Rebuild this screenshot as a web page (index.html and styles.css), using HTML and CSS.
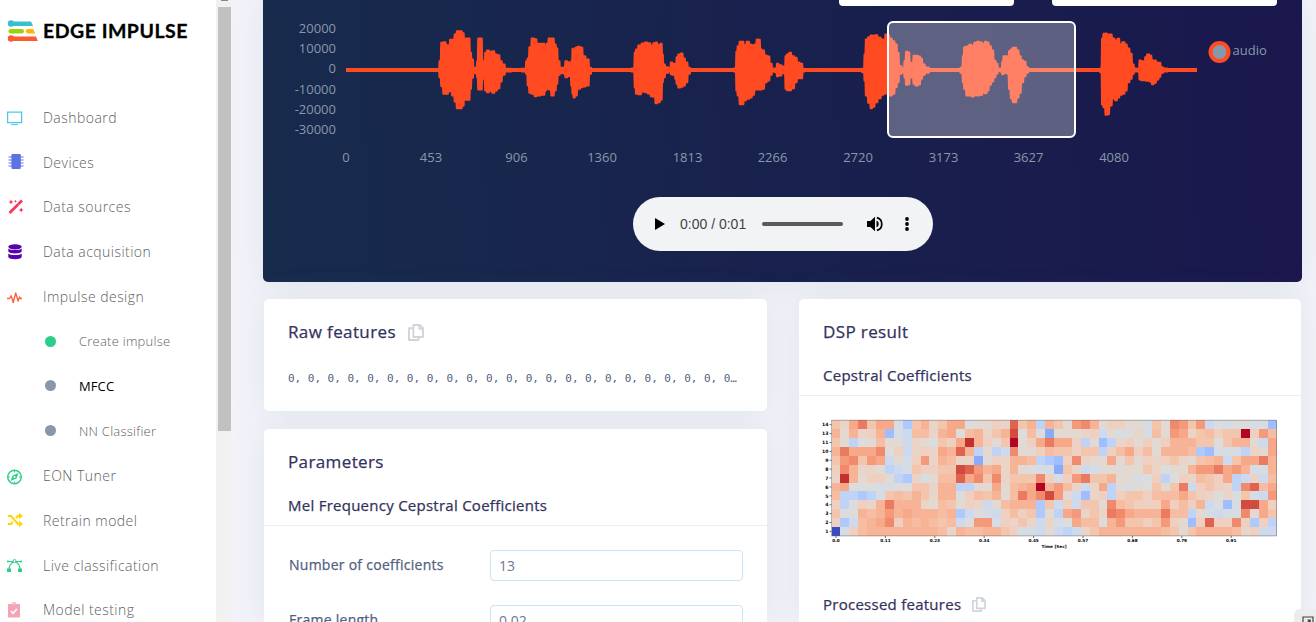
FILE: index.html
```html
<!DOCTYPE html>
<html lang="en">
<head>
<meta charset="utf-8">
<title>MFCC - Edge Impulse</title>
<link rel="stylesheet" href="styles.css">
</head>
<body>
<svg class="defs" width="0" height="0">
  <symbol id="copy" viewBox="0 0 16 17"><path d="M5.400 1h6.400L15 4.200V13H5.400zM11.300 1v3.700H15M5 4.200H1V16h9.500v-2.500" fill="none" stroke="currentColor" stroke-width="1.900" stroke-linejoin="round"/></symbol>
</svg>
<div class="app">
  <aside class="sidebar">
    <div class="logo">
      <svg width="32" height="24" viewBox="0 0 32 24">
        <path d="M3 2.500h21l2 4.500H3z" fill="#3bbfcf"/><circle cx="4" cy="4.500" r="3.200" fill="#3bbfcf"/>
        <rect x="1.500" y="10" width="15.500" height="4.400" rx="2.200" fill="#a0cf10"/>
        <path d="M21 10h5l2.300 4.400H21a2.200 2.200 0 0 1 0-4.400z" fill="#ffb500"/>
        <path d="M3 17.500h26l1.800 4.500H3z" fill="#fc5a2f"/><circle cx="4" cy="19.500" r="3.200" fill="#fc5a2f"/>
      </svg>
      <span class="wordmark">EDGE IMPULSE</span>
    </div>
    <nav class="menu">
      <a class="item"><svg viewBox="0 0 16 16" class="ico sky"><path d="M.6 3.100h14v10.500H.6z" fill="none" stroke="currentColor" stroke-width="1.300"/><path d="M4 15.600h7" stroke="currentColor" stroke-width="1"/></svg>Dashboard</a>
      <a class="item"><svg viewBox="0 0 16 16" class="ico indigo"><rect x="4.400" y="0" width="9.400" height="15" rx="1.200" fill="currentColor"/><path d="M1.500 3h15M1.500 6h15M1.500 9h15M1.500 12h15" stroke="currentColor" stroke-width="1.200"/></svg>Devices</a>
      <a class="item"><svg viewBox="0 0 16 16" class="ico red"><path d="M2.500 14 15 1.500" stroke="currentColor" stroke-width="2.600"/><path d="M10.500 4.300l1.600 1.600" stroke="#fff" stroke-width=".5"/><path d="M4 .5l.8 1.700 1.700.8-1.700.8L4 5.500l-.8-1.700L1.500 3l1.700-.8zM8.500.8l.5 1 1 .5-1 .5-.5 1-.5-1-1-.5 1-.5zM14.200 8.500l.8 1.700 1.500.8-1.500.8-.8 1.700-.8-1.700-1.700-.8 1.700-.8z" fill="currentColor"/></svg>Data sources</a>
      <a class="item"><svg viewBox="0 0 16 16" class="ico purple"><ellipse cx="8" cy="2.800" rx="6.700" ry="2.600" fill="currentColor"/><path d="M1.300 4.600c2 2 11.400 2 13.400 0v3c-1 2.600-12.400 2.600-13.400 0zM1.300 9.600c2 2 11.400 2 13.400 0V13c-1 3-12.400 3-13.400 0z" fill="currentColor"/></svg>Data acquisition</a>
      <a class="item"><svg viewBox="0 0 16 16" class="ico orange"><path d="M0 10.500h2.500L4.200 7.800l2 6.700L8.700 5l2.400 8 1.500-4 .9 1.500H15" fill="none" stroke="currentColor" stroke-width="1.400" stroke-linejoin="round"/></svg>Impulse design</a>
      <a class="item sub"><i class="dot on"></i>Create impulse</a>
      <a class="item sub active"><i class="dot"></i>MFCC</a>
      <a class="item sub"><i class="dot"></i>NN Classifier</a>
      <a class="item"><svg viewBox="0 0 16 16" class="ico green"><circle cx="7.500" cy="9" r="6.800" fill="none" stroke="currentColor" stroke-width="1.400"/><path d="M11.500 5 9.500 10.500l-6 2.500L5.600 7.500z" fill="currentColor"/><circle cx="7.500" cy="9" r="1" fill="#fff"/><path d="M7.500 2.500v2M7.500 13.500v2M1 9h2M12 9h2" stroke="currentColor"/></svg>EON Tuner</a>
      <a class="item"><svg viewBox="0 0 16 16" class="ico yellow"><path d="M1 4h3l7 8h2M1 12h3l1.800-2M8.800 6 11 4h2" fill="none" stroke="currentColor" stroke-width="2"/><path d="M12 .8 16 4l-4 3.200zM12 8.800l4 3.200-4 3.200z" fill="currentColor"/></svg>Retrain model</a>
      <a class="item"><svg viewBox="0 0 16 16" class="ico green"><path d="M1 4.500h13M2 12.500C2 9 3.500 6 7.500 4.500 11.500 6 13 9 13 12.500" fill="none" stroke="currentColor" stroke-width="1.200"/><path d="M0 11.500h4v3.500H0zM11 11.500h4v3.500h-4z" fill="currentColor"/><circle cx="7.500" cy="4" r="1.500" fill="#fff" stroke="currentColor"/><circle cx="1" cy="4.500" r="1.100" fill="currentColor"/><circle cx="14" cy="4.500" r="1.100" fill="currentColor"/></svg>Live classification</a>
      <a class="item"><svg viewBox="0 0 16 16" class="ico pink"><path d="M2 2h3a2 2 0 0 1 4 0h3a1 1 0 0 1 1 1v11.500a1 1 0 0 1-1 1H2a1 1 0 0 1-1-1V3a1 1 0 0 1 1-1z" fill="currentColor"/><path d="M4 9l2 2.300 4-4.300" fill="none" stroke="#fff" stroke-width="1.500"/><circle cx="7" cy="2" r=".7" fill="#fff"/></svg>Model testing</a>
    </nav>
  </aside>
  <div class="scrollbar"><div class="cap"></div><div class="thumb"></div></div>
  <main class="content">
    <section class="panel">
      <div class="selects"><div class="select sm"></div><div class="select lg"></div></div>
      <svg class="chart" id="chart" width="1039" height="175" viewBox="263 5 1039 175">
        <path d="M336 70.500h10" stroke="#222b35"/>
        <g id="wave" fill="#ff4a22" stroke="#ff4a22" stroke-linejoin="round"><path d="M346 70h851" stroke-width="4"/></g>
        <rect x="888" y="22" width="187" height="115" rx="5" fill="#fff" fill-opacity=".3" stroke="#fff" stroke-width="2"/>
        <g class="axis end">
          <text x="336" y="33">20000</text><text x="336" y="53">10000</text><text x="336" y="73">0</text><text x="336" y="94">-10000</text><text x="336" y="114">-20000</text><text x="336" y="134">-30000</text>
        </g>
        <g class="axis mid">
          <text x="346" y="162">0</text><text x="431" y="162">453</text><text x="516.500" y="162">906</text><text x="602" y="162">1360</text><text x="687.500" y="162">1813</text><text x="772.500" y="162">2266</text><text x="858" y="162">2720</text><text x="943.500" y="162">3173</text><text x="1028.500" y="162">3627</text><text x="1114" y="162">4080</text>
        </g>
        <circle cx="1219.500" cy="52" r="9" fill="#8898aa" stroke="#ff4a22" stroke-width="4"/>
        <text class="axis" x="1232.500" y="55">audio</text>
      </svg>
      <div class="player">
        <svg class="play" width="10" height="12" viewBox="0 0 10 12"><path d="M0 0l10 6-10 6z"/></svg>
        <span class="time">0:00 / 0:01</span>
        <div class="track"></div>
        <svg class="vol" width="16" height="16" viewBox="0 0 16 16"><path d="M0 5h3.500L8 .8v14.400L3.500 11H0z"/><path d="M9.500 4.500a3.800 3.800 0 0 1 0 7z"/><path d="M9.800 1.600a6.600 6.600 0 0 1 0 12.800" fill="none" stroke="#000" stroke-width="1.700"/></svg>
        <svg class="dots" width="4" height="14" viewBox="0 0 4 14"><circle cx="2" cy="2" r="1.900"/><circle cx="2" cy="7" r="1.900"/><circle cx="2" cy="12" r="1.900"/></svg>
      </div>
    </section>
    <div class="columns">
      <div class="col">
        <section class="card raw">
          <h3 class="title">Raw features <svg class="copy" width="16" height="17"><use href="#copy"/></svg></h3>
          <div class="values">0, 0, 0, 0, 0, 0, 0, 0, 0, 0, 0, 0, 0, 0, 0, 0, 0, 0, 0, 0, 0, 0, 0…</div>
        </section>
        <section class="card params">
          <h3 class="title">Parameters</h3>
          <h4 class="subtitle">Mel Frequency Cepstral Coefficients</h4>
          <div class="form">
            <label class="label">Number of coefficients</label><div class="field">13</div>
            <label class="label">Frame length</label><div class="field">0.02</div>
          </div>
        </section>
      </div>
      <section class="card dsp">
        <h3 class="title">DSP result</h3>
        <h4 class="subtitle">Cepstral Coefficients</h4>
        <svg class="heat" id="heat" width="460" height="140" viewBox="819 415 460 140"></svg>
        <h4 class="subtitle processed">Processed features <svg class="copy" width="14" height="15"><use href="#copy"/></svg></h4>
      </section>
    </div>
  </main>
  <div class="corner"><svg width="12" height="12" viewBox="0 0 12 12"><path d="M1 1h10v10H1zM4 8l4-4M5.500 4h2.700v2.500" fill="none" stroke="#444" stroke-width="1.200"/></svg></div>
</div>
<script src="script.js"></script>
</body>
</html>
```
FILE: styles.css
```css
* { box-sizing: border-box; }
body { margin: 0; height: 622px; overflow: hidden; background: #f2f3f9; font-family: "Open Sans", "Noto Sans", sans-serif; color: #525f7f; }
.defs { position: absolute; }
.app { display: flex; height: 622px; position: relative; overflow: hidden; }
.sidebar { width: 216px; flex: none; background: #fff; overflow: hidden; }
.logo { display: flex; height: 95px; padding: 19px 0 0 7px; }
.wordmark { margin-left: 4px; font: 700 19.5px/24px Lato, sans-serif; letter-spacing: .5px; -webkit-text-stroke: .3px; color: #000; white-space: nowrap; }
.item { display: flex; align-items: center; height: 44.770px; font-size: 14px; font-weight: 300; letter-spacing: .46px; color: #606060; padding-left: 7px; white-space: nowrap; }
.ico { width: 16px; height: 16px; margin-right: 20px; flex: none; overflow: visible; }
.sub { font-size: 13px; padding-left: 44.500px; letter-spacing: .24px; }
.active { color: #000; font-weight: 400; letter-spacing: .1px; }
.dot { width: 11px; height: 11px; border-radius: 50%; background: #8898aa; margin-right: 23.500px; }
.dot.on { background: #2dce89; }
.sky { color: #4cc9ea; } .indigo { color: #5e72e4; } .red { color: #f5365c; } .purple { color: #5603ad; }
.orange { color: #fb6340; } .green { color: #2dce89; } .yellow { color: #ffd600; } .pink { color: #f3a4b5; }
.scrollbar { width: 15px; flex: none; background: #f1f1f1; padding-left: 2px; }
.cap { height: 1px; width: 7px; margin: 0 0 6px 3px; background: #888; }
.thumb { height: 424px; width: 13px; background: #c1c1c1; }
.content { flex: 1; padding: 0 14px 0 32px; }
.panel { height: 282px; border-radius: 0 0 5px 5px; background: linear-gradient(87deg, #172b4d, #1a174d); box-shadow: 0 0 32px rgba(136,152,170,.15); }
.selects { display: flex; justify-content: flex-end; gap: 38px; padding-right: 25px; height: 5px; }
.select { background: #fff; border-radius: 0 0 4px 4px; height: 6px; }
.sm { width: 175px; } .lg { width: 225px; }
.chart { display: block; }
.axis { font: 13px "Open Sans", sans-serif; fill: #8898aa; }
.end { text-anchor: end; } .mid { text-anchor: middle; }
.player { display: flex; align-items: center; width: 300px; height: 54px; margin: 17px 0 0 370px; border-radius: 27px; background: #f1f3f4; padding-left: 22px; }
.time { font: 14px "Liberation Sans", Arial, sans-serif; color: #444; width: 82px; margin-left: 15px; }
.track { width: 81px; height: 4px; border-radius: 2px; background: #5a5a5a; }
.vol { margin-left: 24px; } .dots { margin-left: 22px; }
.columns { display: flex; justify-content: space-between; height: 340px; padding: 17px 1px 0; }
.col { width: 503px; height: 323px; }
.card { background: #fff; border-radius: 5px; box-shadow: 0 0 32px rgba(136,152,170,.15); }
.raw { height: 112px; margin-bottom: 18px; }
.params { height: 193px; border-radius: 5px 5px 0 0; }
.dsp { width: 502px; height: 323px; border-radius: 5px 5px 0 0; }
.title { margin: 0; padding: 20px 24px 0; font-size: 17px; line-height: 26px; font-weight: 500; letter-spacing: .38px; -webkit-text-stroke: .25px; color: #32325d; display: flex; align-items: center; }
.title .copy { margin-left: 12px; }
.copy { color: #d0d5db; }
.values { padding: 26px 24px 0; font: 11px/16px "DejaVu Sans Mono", monospace; letter-spacing: -.02px; color: #525f7f; white-space: pre; }
.subtitle { margin: 0; padding: 18px 24px 8px; font-size: 15px; line-height: 24px; font-weight: 500; letter-spacing: .26px; -webkit-text-stroke: .25px; color: #32325d; border-bottom: 1px solid #eceef0; display: flex; align-items: center; }
.form { display: grid; grid-template-columns: 201px 253px; row-gap: 24px; height: 96px; padding: 24px 25px 0; overflow: hidden; }
.label { font-size: 14px; font-weight: 500; letter-spacing: .26px; -webkit-text-stroke: .25px; line-height: 29px; }
.field { height: 31px; border: 1px solid #cbe4f1; border-radius: 4px; padding: 0 8px; font-size: 14px; line-height: 30px; color: #6b7796; }
.heat { display: block; margin: 19px 0 0 20px; }
.processed { border: 0; padding: 37px 24px 0; }
.processed .copy { margin-left: 11px; }
.corner { position: absolute; right: 0; bottom: 0; width: 22px; height: 13px; border-radius: 6px 0 0 0; background: #ececec; padding: 7px 0 0 8px; overflow: hidden; line-height: 0; }
```
FILE: script.js
```js
const NS = 'http://www.w3.org/2000/svg';
function add(parent, tag, attrs, text) {
  const el = document.createElementNS(NS, tag);
  for (const k in attrs) el.setAttribute(k, attrs[k]);
  if (text) el.textContent = text;
  parent.appendChild(el);
}

// Speech bursts: origin x, then x / top / bottom samples in thirds of a pixel.
const bursts = [
  [260, '535,203,218 540,180,235 545,125,262 553,123,285 562,132,285 567,140,277 571,116,277 580,116,290 586,100,308 593,90,328 602,90,328 610,96,320 614,115,290 618,112,303 628,112,303 631,155,270 637,175,237 643,200,222 649,200,224 652,180,235 655,112,272 665,112,272 668,182,235 672,180,240 677,155,275 683,148,280 692,152,276 700,150,282 707,160,275 716,162,268 722,180,248 730,190,228 740,203,218 770,206,216 798,203,218'],
  [260, '795,203,218 800,180,225 804,172,260 810,138,282 818,112,285 828,114,292 832,128,290 852,128,288 856,150,275 862,128,270 868,112,272 878,112,290 886,130,275 890,142,255 896,180,228 903,200,223 912,200,223 918,180,235 926,183,232 930,203,220 935,180,260 938,143,285 942,148,296 948,140,290 955,137,270 966,140,265 970,165,263 984,175,260 990,200,225 998,205,215'],
  [600, '85,206,215 102,202,218 104,155,265 110,145,285 118,133,286 130,127,278 138,124,280 148,126,284 155,134,292 163,126,294 168,124,313 176,132,310 184,128,303 188,160,250 191,190,235 200,198,222 210,202,218 213,184,226 222,188,228 228,190,240 230,168,255 238,160,266 246,157,264 251,172,260 260,184,250 266,200,225 275,205,215'],
  [600, '395,206,215 407,202,218 409,152,275 415,135,290 421,122,316 428,122,316 434,132,304 444,122,300 452,131,296 460,132,288 466,130,272 472,115,272 479,116,272 482,145,272 490,148,270 496,163,250 506,166,245 512,188,228 520,202,218 528,202,220 532,188,232 540,192,230 550,196,222 554,200,225 557,165,270 563,160,274 570,155,274 578,165,268 588,170,250 594,184,238 605,188,238 610,203,218 618,206,215'],
  [600, '780,206,215 791,203,220 794,160,245 799,115,290 808,108,312 814,103,328 820,104,324 828,102,310 838,110,298 848,115,288 853,140,285 857,100,284 864,102,280 872,112,290 880,120,285 888,130,265 894,155,250 900,195,225 911,202,220 914,180,236 920,152,258 927,154,256 931,185,235 938,188,236 941,164,255 950,164,260 958,166,256 964,173,240 970,190,228 980,199,222 995,206,214'],
  [940, '55,205,216 66,200,222 69,165,250 74,138,270 82,136,290 92,131,290 98,135,293 106,125,289 115,122,290 124,124,288 131,130,280 137,122,283 144,124,275 149,135,258 158,148,248 163,178,235 171,188,225 176,203,216 184,203,218 187,183,226 192,165,224 199,165,222 204,180,225 208,150,270 215,145,298 220,140,310 226,140,310 233,148,296 240,165,282 246,178,250 255,182,232 260,198,222 270,206,214'],
  [940, '475,205,215 484,202,220 486,113,317 493,98,325 498,97,348 504,100,346 512,100,320 520,112,298 528,118,304 535,113,296 542,130,288 550,123,285 558,130,275 564,142,250 574,158,240 578,190,225 586,202,218 596,204,218 599,178,242 609,180,244 613,192,230 616,168,245 625,160,246 632,164,248 638,178,256 645,178,252 652,185,242 660,185,234 664,198,222 675,202,218 690,206,214']
];
// Hold each sample to the midpoint before its neighbour, giving a stepped edge.
function stepped(points, side, inset) {
  const out = [];
  points.forEach((p, i) => {
    const prev = points[i - 1] || p, next = points[i + 1] || p;
    out.push([(prev[0] + p[0]) / 2 + .6, p[side] + inset], [(p[0] + next[0]) / 2 - .6, p[side] + inset]);
  });
  return out;
}
const wave = document.getElementById('wave');
bursts.forEach(([ox, s]) => {
  const p = s.split(' ').map(t => t.split(',').map(Number));
  const outline = stepped(p, 1, 3).concat(stepped(p, 2, -3).reverse());
  add(wave, 'polygon', { points: outline.join(' '), transform: `translate(${ox} 0) scale(.33333)`, 'stroke-width': 5 });
});

// Cepstral heat map, letters index the diverging palette from cold to hot.
const palette = ['#3b4cc0','#88abfd','#9fbeff','#adc9fd','#bfd3f6','#cdd9ec','#d6dce4','#dddcdc','#e3d9d3','#ead4c8','#efcfbf','#f4c5ad','#f6bda2','#f7b396','#f7a889','#f49a7b','#f08a6c','#ea7b60','#df634e','#d24b40','#c43032','#b40426'];
const rows = [
  'ljorloogdlnjloohi' + 'ikjslnenlipqnikk' + 'iigliqplpfhghhggc',
  'ninjkncgfmmjnohmn' + 'jlnthmhbiiijkfig' + 'hjgmipojlmkllvkpm',
  'liehimiifjihlkoun' + 'kilvikorookeicej' + 'kikiknnnllhlnnifo',
  'nroooqhkfjkjonsne' + 'iefqiikmllkllekm' + 'okminnnmdcgggejio',
  'lpqlpofigkpjnmjjb' + 'ikjnnmedckqjiioi' + 'likjkljilmnfloorn',
  'kqnjjiefglkklltsp' + 'nojnihggbljfgiii' + 'iiljhiinppropnggn',
  'junikkiedjgimmsoq' + 'lqjlllqkgkprllni' + 'ighkehkjmlkoefjfm',
  'nohhhgghhlljnneei' + 'ioimnovnpmjfjoei' + 'gihlilrfklkjeqsmo',
  'meedeglmlnljnnhkm' + 'lnimroqtpifcjkek' + 'llkmmmolkjhjhlgfp',
  'kehkjnrnnnjimlikj' + 'fimnnndlfkflliqm' + 'lkkkokmknfhcgttok',
  'lhhnmnpnonnnmndfh' + 'gfkmkldieopjljrq' + 'onnnrmmeigfggqiol',
  'kdfmnoqknmnmlmfhp' + 'pgkjljfjghommhnp' + 'llklpkickskkqkdke',
  'agkmnnnnnnnnmjnmm' + 'nnlkggfifefjlnnn' + 'nnnnmlilnnnnmjkff'
];
const heat = document.getElementById('heat');
const X0 = 831.5, Y0 = 420.2, C = 8.9;
rows.forEach((r, y) => [...r].forEach((ch, x) => add(heat, 'rect', {
  x: X0 + x * C, y: Y0 + y * C, width: C + .15, height: C + .15, fill: palette[ch.charCodeAt(0) - 97], 'shape-rendering': 'crispEdges'
})));
add(heat, 'rect', { x: X0, y: Y0, width: 445, height: 115.7, fill: 'none', stroke: '#666', 'stroke-opacity': .6, 'stroke-width': .8 });
const font = { 'font-family': 'DejaVu Sans', 'font-size': 4.6, 'font-weight': 700 };
['14', '13', '11', '10', '9', '8', '7', '6', '5', '4', '3', '2', '1'].forEach((t, i) => {
  const y = Y0 + (i + .5) * C;
  add(heat, 'text', { x: 828.5, y: y + 1.7, 'text-anchor': 'end', ...font }, t);
  add(heat, 'path', { d: `M829.5 ${y}h2`, stroke: '#333', 'stroke-width': .7 });
});
['0.0', '0.11', '0.23', '0.34', '0.45', '0.57', '0.68', '0.79', '0.91'].forEach((t, i) => {
  const x = 836 + i * 49.4;
  add(heat, 'text', { x, y: 542.4, 'text-anchor': 'middle', ...font, 'font-size': 4.2 }, t);
  add(heat, 'path', { d: `M${x} 536v2`, stroke: '#333', 'stroke-width': .7 });
});
add(heat, 'text', { x: 1054, y: 548.3, 'text-anchor': 'middle', ...font, 'font-size': 4.2 }, 'Time [Sec]');
```
